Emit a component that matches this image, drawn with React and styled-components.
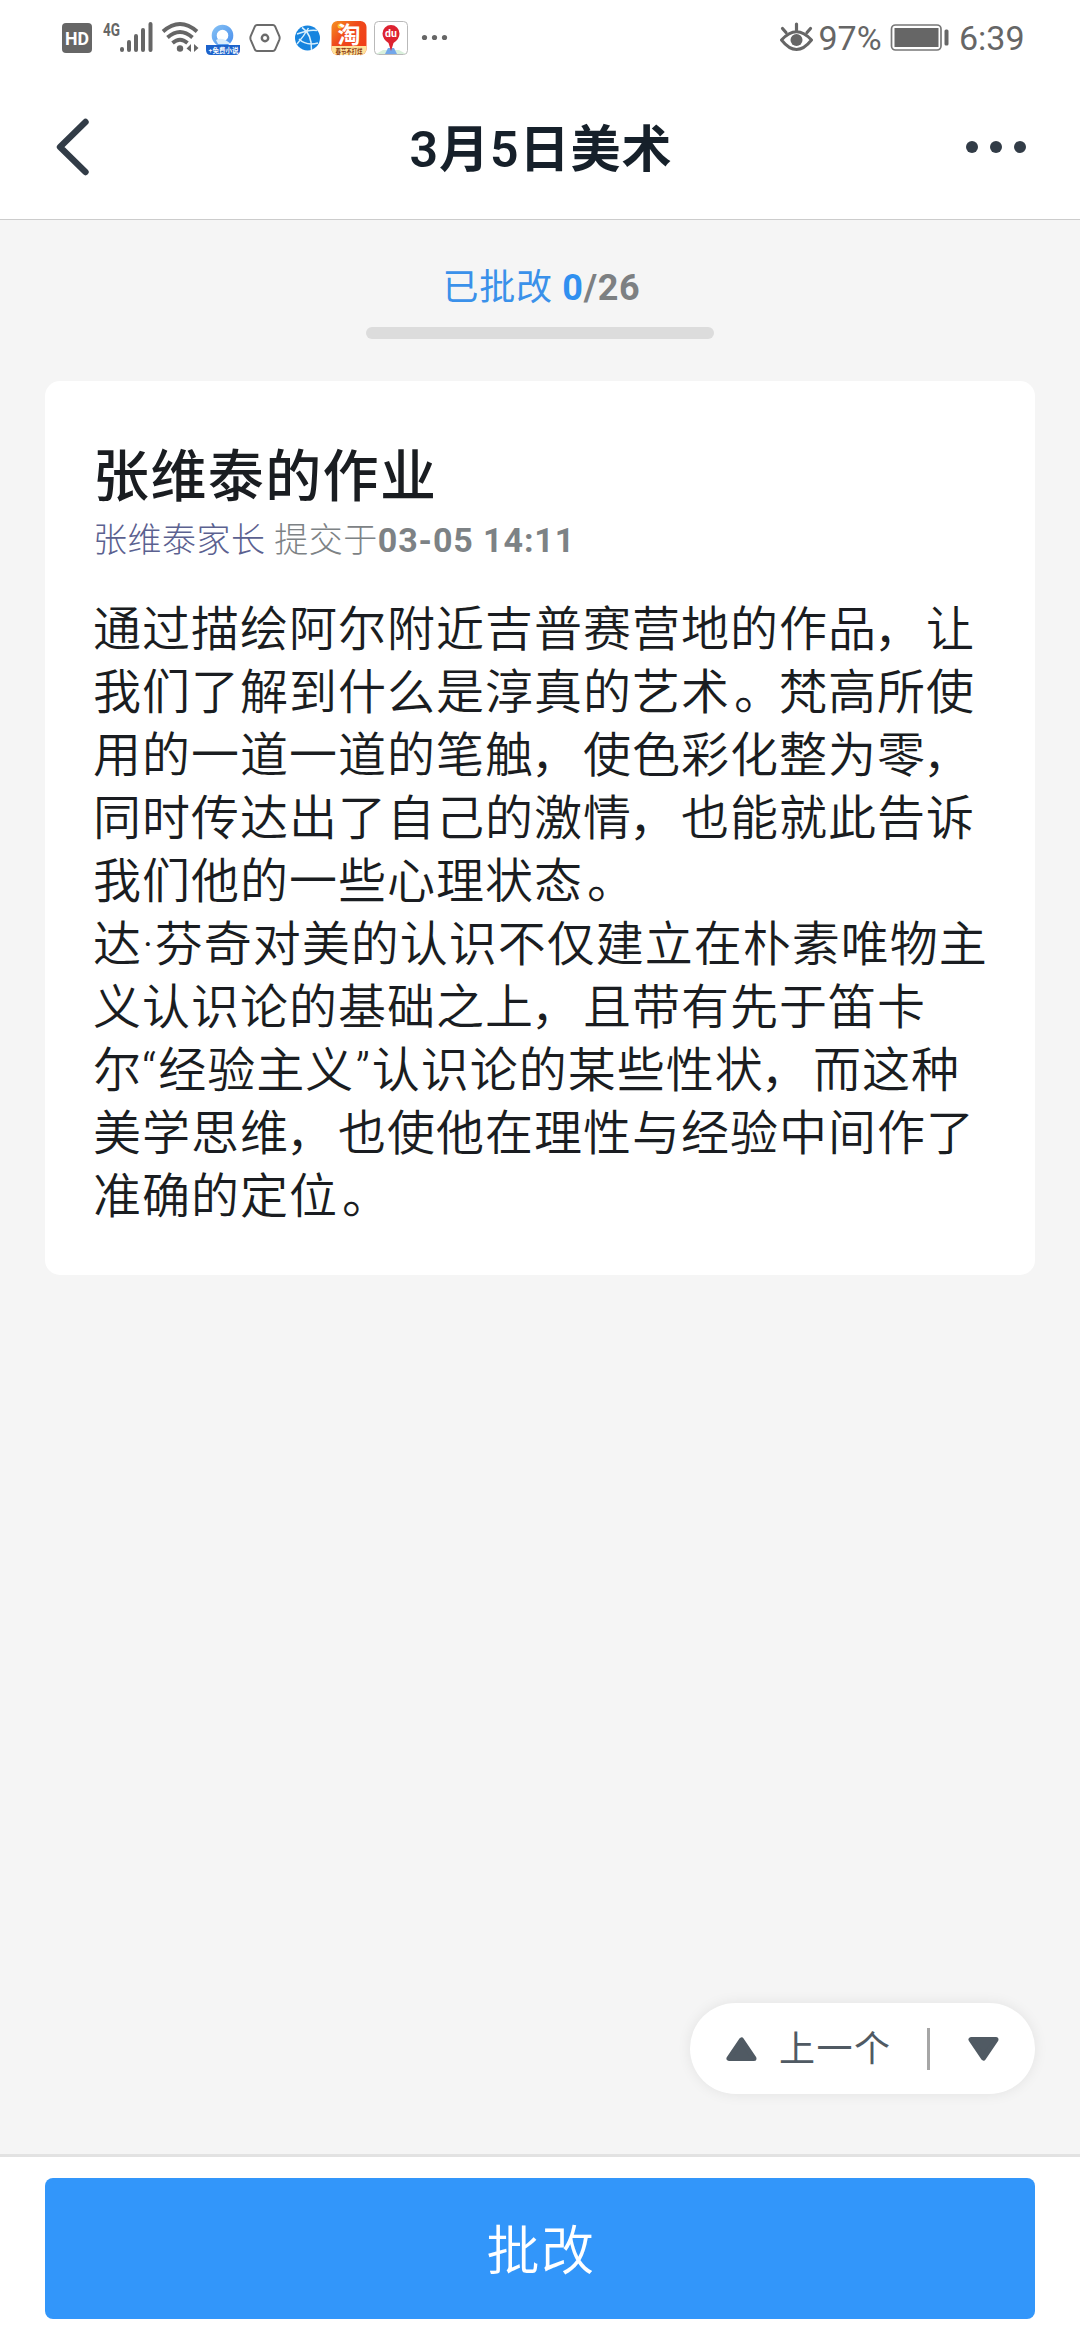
import React from "react";
import styled, { createGlobalStyle } from "styled-components";

const GlobalStyle = createGlobalStyle`
  * { box-sizing: border-box; }
  html, body { margin: 0; padding: 0; background: #f5f5f5; }
  body { font-family: Roboto, "Noto Sans CJK SC", sans-serif; }
  svg { display: block; flex: none; }
`;

const Screen = styled.div`
  width: 1080px;
  height: 2340px;
  display: flex;
  flex-direction: column;
  background: #f5f5f5;
  overflow: hidden;
`;

const StatusBar = styled.div`
  height: 74px;
  flex: none;
  display: flex;
  justify-content: space-between;
  padding: 0 56px 0 60px;
  background: #fff;
`;

const StatusGroup = styled.div`
  display: flex;
  align-items: center;
  height: 76px;
`;

const StatusText = styled.span`
  font-size: 34px;
  line-height: 40px;
  width: ${(p) => p.$width}px;
  margin-left: ${(p) => p.$gap}px;
  color: #666;
  white-space: nowrap;
  font-weight: 400;
`;

const NavBar = styled.header`
  height: 146px;
  flex: none;
  display: flex;
  align-items: center;
  justify-content: space-between;
  padding: 0 54px;
  background: #fff;
  border-bottom: 1px solid #ccc;
`;

const IconButton = styled.button`
  border: 0;
  padding: 0;
  background: none;
  width: 62px;
  height: 62px;
  display: flex;
  align-items: center;
  justify-content: ${(p) => p.$align};
`;

const NavTitle = styled.h1`
  margin: 6px 0 0 2px;
  font-size: 50px;
  line-height: 72px;
  font-weight: 600;
  letter-spacing: 1px;
  color: #16202a;
`;

const Content = styled.main`
  flex: 1;
  display: flex;
  flex-direction: column;
  padding: 0 45px;
`;

const Progress = styled.section`
  height: 161px;
  display: flex;
  flex-direction: column;
  align-items: center;
  padding-top: 42px;
`;

const ProgressLabel = styled.div`
  margin-left: 3px;
  font-size: 36px;
  line-height: 52px;
  letter-spacing: 0.7px;
  color: #3a91ea;
  white-space: pre;
`;

const Count = styled.b`
  font-weight: 700;
  color: ${(p) => p.$color};
`;

const Track = styled.div`
  width: 348px;
  height: 12px;
  margin-top: 13px;
  border-radius: 6px;
  background: #dcdcdc;
`;

const Card = styled.article`
  height: 894px;
  padding: 58px 48px 0;
  border-radius: 15px;
  background: #fff;
`;

const CardTitle = styled.h2`
  margin: 0;
  font-size: 56px;
  line-height: 76px;
  letter-spacing: 1.4px;
  font-weight: 500;
  color: #1a1d21;
`;

const Meta = styled.div`
  display: flex;
  height: 50px;
  font-size: 34px;
  line-height: 50px;
  letter-spacing: 0.5px;
  font-weight: 300;
  color: #7d8285;
  white-space: pre;
`;

const Parent = styled.span`
  color: #5b6190;
`;

const Time = styled.b`
  font-weight: 700;
  letter-spacing: 0.9px;
  color: #7d8285;
`;

const Essay = styled.div`
  margin-top: 33px;
  font-size: 48px;
  letter-spacing: 1px;
  font-weight: 350;
  color: #1a1d21;
`;

const Line = styled.div`
  height: 63px;
  line-height: 63px;
  white-space: nowrap;
`;

const Mark = styled.span`
  margin: 0 ${(p) => p.$trail}px 0 ${(p) => p.$lead}px;
`;

const Pager = styled.nav`
  align-self: flex-end;
  margin: auto 0 60px;
  width: 345px;
  height: 91px;
  display: flex;
  align-items: center;
  padding: 0 36px;
  border-radius: 46px;
  background: #fff;
  box-shadow: 0 0 14px rgba(0, 0, 0, 0.08);
`;

const PagerText = styled.span`
  margin-left: 22px;
  padding-top: 2px;
  font-size: 36px;
  line-height: 52px;
  letter-spacing: 1.5px;
  color: #505a63;
`;

const PagerDivider = styled.i`
  width: 3px;
  height: 42px;
  margin: 0 38px 0 auto;
  background: #a6a6a6;
`;

const Footer = styled.footer`
  height: 186px;
  flex: none;
  padding: 21px 45px;
  border-top: 3px solid #e2e2e2;
  background: #fff;
`;

const Primary = styled.button`
  display: flex;
  align-items: center;
  justify-content: center;
  width: 100%;
  height: 141px;
  border: 0;
  border-radius: 8px;
  padding: 0 0 4px 2px;
  background: #3296fa;
  color: #fff;
  font-family: inherit;
  font-size: 53px;
  letter-spacing: 1.5px;
  font-weight: 350;
`;

const lines = [
  "通过描绘阿尔附近吉普赛营地的作品，让",
  "我们了解到什么是淳真的艺术。梵高所使",
  "用的一道一道的笔触，使色彩化整为零，",
  "同时传达出了自己的激情，也能就此告诉",
  "我们他的一些心理状态。",
  "达·芬奇对美的认识不仅建立在朴素唯物主",
  "义认识论的基础之上，且带有先于笛卡",
  "尔“经验主义”认识论的某些性状，而这种",
  "美学思维，也使他在理性与经验中间作了",
  "准确的定位。",
];

/* Optical spacing before and after each punctuation mark */
const marks = {
  "，": [-3, 3],
  "。": [4, -4],
  "“": [0, 1],
  "”": [1, 1],
};

const spaced = (text) =>
  text.split(/([，。“”])/).map((part, i) =>
    marks[part] ? (
      <Mark key={i} $lead={marks[part][0]} $trail={marks[part][1]}>{part}</Mark>
    ) : (
      part
    )
  );

const CJK = '"Noto Sans CJK SC", sans-serif';

/* Network indicators: HD badge, 4G bars, wifi */
const NetworkIcons = () => (
  <svg width="140" height="76" viewBox="60 0 140 76">
    <rect x="62" y="23" width="30" height="30" rx="4" fill="#666" />
    <text x="77" y="45" fontSize="19" fontWeight="700" fill="#fff" textAnchor="middle" textLength="24" lengthAdjust="spacingAndGlyphs" fontFamily="Roboto, sans-serif">HD</text>
    <text x="103" y="36" fontSize="19" fontWeight="700" fill="#666" textLength="17" lengthAdjust="spacingAndGlyphs" fontFamily="Roboto, sans-serif">4G</text>
    <g stroke="#666" strokeWidth="4" strokeLinecap="round">
      <path d="M122 49v1M129 42v8M136 36v14M143 30v20M150.500 24v26" />
    </g>
    <g fill="none" stroke="#666" strokeWidth="3.800">
      <path d="M163 31.500Q180 16.500 197 31.500M167.500 37.500Q180 26.500 192.500 37.500M172.500 43Q180 36.500 187.500 43" />
    </g>
    <circle cx="180" cy="48.500" r="3.200" fill="#666" />
    <path d="M191 44v8l-4.500-3.500zM194 44v8l4.500-4z" fill="#666" />
  </svg>
);

/* Notification icons of running apps */
const AppIcons = () => (
  <svg width="250" height="76" viewBox="200 0 250 76">
    <defs>
      <linearGradient id="ring" x1="0" y1="0" x2="1" y2="1">
        <stop offset="0" stopColor="#80bdf4" />
        <stop offset="1" stopColor="#4f93ed" />
      </linearGradient>
      <linearGradient id="tao" x1="0" y1="0" x2="1" y2="1">
        <stop offset="0" stopColor="#f79320" />
        <stop offset="0.400" stopColor="#ef4a1c" />
        <stop offset="1" stopColor="#f23a16" />
      </linearGradient>
    </defs>
    <circle cx="222.500" cy="35.500" r="8.300" fill="none" stroke="url(#ring)" strokeWidth="5" />
    <path d="M216 40q6-4 15 4h-13z" fill="#d9ecfb" />
    <path d="M206 45h34v5q0 5-5 5h-24q-5 0-5-5z" fill="#1c62cb" />
    <text x="223.500" y="52.500" fontSize="6.500" fontWeight="700" fill="#fff" textAnchor="middle" fontFamily={CJK}>+免费小说</text>

    <path d="M257 25h16q1.300 0 2 1.200l4.300 10q.7 1.800 0 3.600l-4.300 10q-.7 1.200-2 1.200h-16q-1.300 0-2-1.200l-4.300-10q-.7-1.800 0-3.600l4.300-10q.7-1.200 2-1.200z" fill="none" stroke="#6b6b6b" strokeWidth="2" />
    <circle cx="265" cy="38" r="3.200" fill="none" stroke="#6b6b6b" strokeWidth="2.400" />

    <circle cx="307.500" cy="38" r="12.500" fill="#1684df" />
    <path d="M297 34Q310 29 317 30.500M302 27.500Q312 34 311.500 50M297 44Q304 36 308.500 28M299 39Q306 46 318 43" fill="none" stroke="#d8effc" strokeWidth="1.500" />

    <clipPath id="taoClip"><rect x="331.500" y="21" width="35" height="34" rx="6" /></clipPath>
    <g clipPath="url(#taoClip)">
      <rect x="331" y="21" width="36" height="34" fill="url(#tao)" />
      <rect x="331" y="46" width="36" height="9" fill="#ffe29a" />
    </g>
    <circle cx="340" cy="26" r="2.500" fill="#ffc42e" />
    <text x="349" y="43" fontSize="23" fontWeight="700" fill="#fff" textAnchor="middle" fontFamily={CJK}>淘</text>
    <text x="349" y="53.500" fontSize="6.500" fontWeight="700" fill="#8a3a12" textAnchor="middle" textLength="27" lengthAdjust="spacingAndGlyphs" fontFamily={CJK}>春节不打烊</text>

    <rect x="374.500" y="21.500" width="33" height="33" rx="4" fill="#fff" stroke="#b9b9b9" />
    <path d="M376 54l7-4h16l7 4z" fill="#d9f0dc" />
    <path d="M385 54l3-6h6l3 6z" fill="#72a7ea" />
    <path d="M391 51L388.500 43Q382.500 39 382.500 33.500A8.500 8.500 0 0 1 399.500 33.500Q399.500 39 393.500 43z" fill="#dd2230" />
    <text x="391" y="37" fontSize="10.500" fontWeight="700" fill="#fff" textAnchor="middle" fontFamily="Roboto, sans-serif">du</text>

    <g fill="#666">
      <circle cx="424.500" cy="37.500" r="2.600" />
      <circle cx="434.500" cy="37.500" r="2.600" />
      <circle cx="444.500" cy="37.500" r="2.600" />
    </g>
  </svg>
);

const EyeIcon = () => (
  <svg width="34" height="76" viewBox="779 0 34 76">
    <path d="M780.500 40Q795.500 23.500 810.500 40Q795.500 59 780.500 40z" fill="none" stroke="#666" strokeWidth="3" strokeLinejoin="round" />
    <circle cx="795.500" cy="40" r="6" fill="#666" />
    <path d="M795.500 24v6M781.500 28.500l3.500 4M809.500 28.500l-3.500 4" stroke="#666" strokeWidth="3.200" strokeLinecap="round" />
  </svg>
);

const BatteryIcon = () => (
  <svg width="59" height="76" viewBox="889.500 0 59 76">
    <rect x="891" y="25" width="49.500" height="25" rx="4" fill="none" stroke="#777" strokeWidth="1.700" />
    <rect x="894" y="28" width="44" height="19" fill="#666" />
    <rect x="944" y="29.500" width="4" height="16" rx="1.500" fill="#666" />
  </svg>
);

const BackIcon = () => (
  <svg width="36" height="60" viewBox="0 0 36 60">
    <path d="M31.500 5L6 30l25.500 25" fill="none" stroke="#323c47" strokeWidth="6.400" strokeLinecap="round" strokeLinejoin="round" />
  </svg>
);

const MoreIcon = () => (
  <svg width="62" height="14" viewBox="0 0 62 14">
    {[8, 32, 56].map((x) => (
      <circle key={x} cx={x} cy="7" r="6" fill="#323c47" />
    ))}
  </svg>
);

const Triangle = ({ down }) => (
  <svg width="31" height="26" viewBox="0 0 31 26">
    <path
      d={down ? "M3 3.500H28L15.500 22z" : "M3 22.500H28L15.500 4z"}
      fill="#505a63"
      stroke="#505a63"
      strokeWidth="5"
      strokeLinejoin="round"
    />
  </svg>
);

export default function App() {
  return (
    <>
      <GlobalStyle />
      <Screen>
        <StatusBar>
          <StatusGroup>
            <NetworkIcons />
            <AppIcons />
          </StatusGroup>
          <StatusGroup>
            <EyeIcon />
            <StatusText $gap={5} $width={71.5}>97%</StatusText>
            <BatteryIcon />
            <StatusText $gap={10} $width={65}>6:39</StatusText>
          </StatusGroup>
        </StatusBar>
        <NavBar>
          <IconButton $align="flex-start" aria-label="返回"><BackIcon /></IconButton>
          <NavTitle>3月5日美术</NavTitle>
          <IconButton $align="flex-end" aria-label="更多"><MoreIcon /></IconButton>
        </NavBar>
        <Content>
          <Progress>
            <ProgressLabel>
              已批改 <Count $color="#3090f0">0</Count><Count $color="#7d8082">/26</Count>
            </ProgressLabel>
            <Track />
          </Progress>
          <Card>
            <CardTitle>张维泰的作业</CardTitle>
            <Meta>
              <Parent>张维泰家长 </Parent>
              <span>提交于</span>
              <Time>03-05 14:11</Time>
            </Meta>
            <Essay>
              {lines.map((line) => (
                <Line key={line}>{spaced(line)}</Line>
              ))}
            </Essay>
          </Card>
          <Pager>
            <Triangle />
            <PagerText>上一个</PagerText>
            <PagerDivider />
            <Triangle down />
          </Pager>
        </Content>
        <Footer>
          <Primary>批改</Primary>
        </Footer>
      </Screen>
    </>
  );
}
